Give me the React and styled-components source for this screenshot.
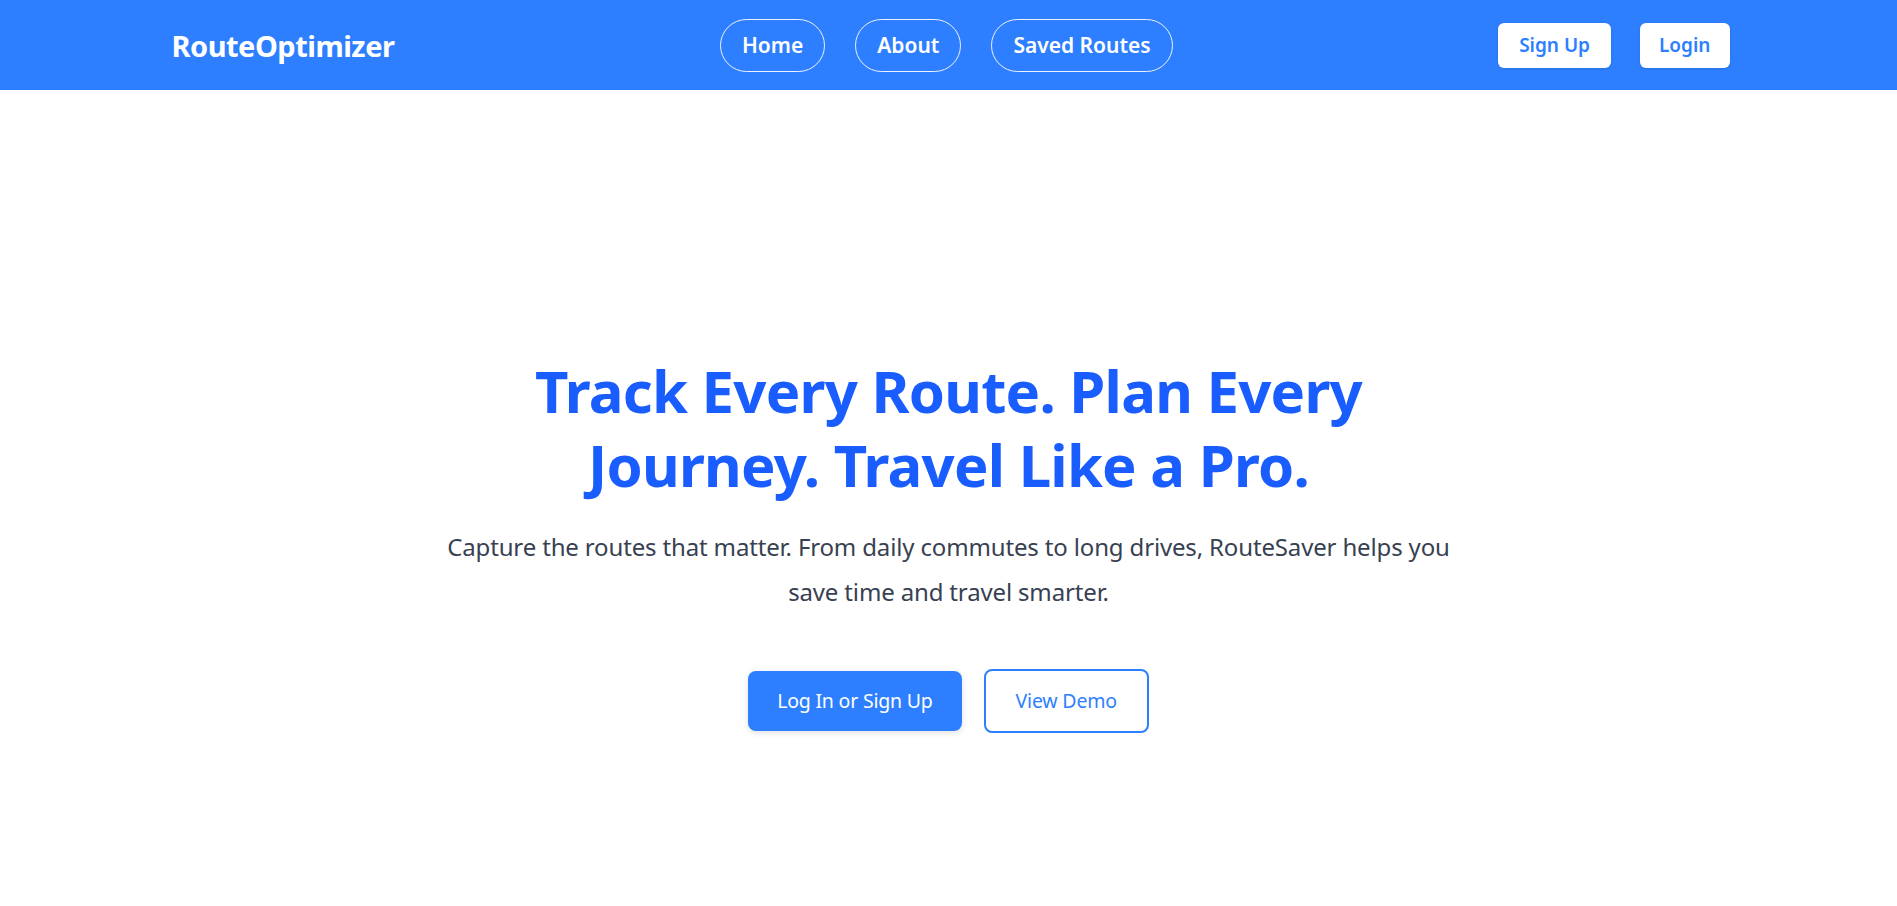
import React from "react";
import styled, { createGlobalStyle } from "styled-components";

const GlobalStyle = createGlobalStyle`
  * { box-sizing: border-box; }
  html, body { margin: 0; padding: 0; }
  body {
    font-family: "Segoe UI", "Noto Sans", sans-serif;
    background: #ffffff;
    color: #374151;
  }
  button { font-family: inherit; }
`;

const NavBar = styled.header`
  background: #2d7fff;
  height: 90px;
  display: flex;
  align-items: center;
`;

const NavInner = styled.nav`
  width: 100%;
  max-width: 1562px;
  margin: 0 auto;
  padding-left: 4px;
  display: flex;
  align-items: center;
  justify-content: space-between;
`;

const Logo = styled.a`
  color: #ffffff;
  font-size: 29px;
  font-weight: 700;
  text-decoration: none;
  letter-spacing: -0.5px;
`;

const LinkGroup = styled.div`
  display: flex;
  align-items: center;
  gap: 30px;
`;

const PillLink = styled.a`
  display: inline-block;
  color: #ffffff;
  font-size: 21px;
  font-weight: 600;
  line-height: 35px;
  padding: 8px 21px;
  border: 1px solid rgba(255, 255, 255, 0.9);
  border-radius: 999px;
  text-decoration: none;
`;

const AuthGroup = styled.div`
  display: flex;
  align-items: center;
  gap: 29px;
`;

const AuthButton = styled.button`
  background: #ffffff;
  color: #2d7fff;
  font-size: 19px;
  font-weight: 600;
  line-height: 29px;
  padding: 8px ${(p) => (p.$narrow ? "19px" : "21px")};
  border: none;
  border-radius: 6px;
  box-shadow: 0 1px 3px rgba(0, 0, 0, 0.12);
  cursor: pointer;
`;

const Hero = styled.main`
  min-height: 100vh;
  display: flex;
  align-items: center;
  justify-content: center;
  padding: 0 24px;
`;

const HeroContent = styled.section`
  max-width: 1010px;
  display: flex;
  flex-direction: column;
  align-items: center;
  text-align: center;
`;

const Title = styled.h1`
  margin: 0;
  color: #1a5dff;
  font-size: 58px;
  font-weight: 700;
  line-height: 74px;
  max-width: 900px;
  letter-spacing: -0.75px;
`;

const Subtitle = styled.p`
  margin: 22px 0 0;
  color: #374151;
  font-size: 24px;
  line-height: 45px;
  letter-spacing: -0.15px;
`;

const Actions = styled.div`
  display: flex;
  align-items: center;
  gap: 22px;
  margin-top: 55px;
`;

const CtaButton = styled.button`
  font-size: 19.5px;
  line-height: 30px;
  padding: 15px ${(p) => (p.$outline ? "30px" : "29px")};
  border-radius: 8px;
  cursor: pointer;
  letter-spacing: -0.2px;
  background: ${(p) => (p.$outline ? "#ffffff" : "#2d7fff")};
  color: ${(p) => (p.$outline ? "#2d7fff" : "#ffffff")};
  border: ${(p) => (p.$outline ? "2px solid #2d7fff" : "none")};
  box-shadow: ${(p) => (p.$outline ? "none" : "0 2px 6px rgba(0, 0, 0, 0.12)")};
`;

export default function App() {
  return (
    <>
      <GlobalStyle />
      <NavBar>
        <NavInner>
          <Logo href="#">RouteOptimizer</Logo>
          <LinkGroup>
            <PillLink href="#">Home</PillLink>
            <PillLink href="#">About</PillLink>
            <PillLink href="#">Saved Routes</PillLink>
          </LinkGroup>
          <AuthGroup>
            <AuthButton>Sign Up</AuthButton>
            <AuthButton $narrow>Login</AuthButton>
          </AuthGroup>
        </NavInner>
      </NavBar>
      <Hero>
        <HeroContent>
          <Title>Track Every Route. Plan Every Journey. Travel Like a Pro.</Title>
          <Subtitle>
            Capture the routes that matter. From daily commutes to long drives, RouteSaver helps you save time and travel smarter.
          </Subtitle>
          <Actions>
            <CtaButton>Log In or Sign Up</CtaButton>
            <CtaButton $outline>View Demo</CtaButton>
          </Actions>
        </HeroContent>
      </Hero>
    </>
  );
}
